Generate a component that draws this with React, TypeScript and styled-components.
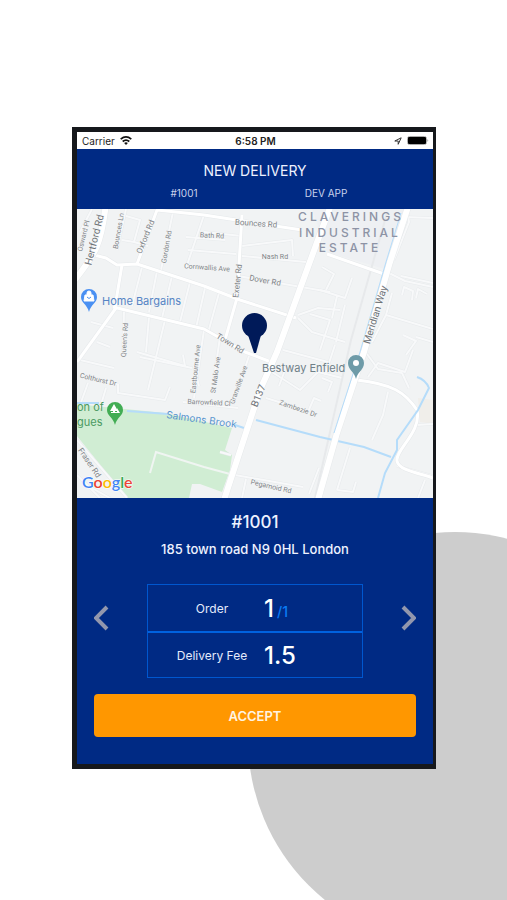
import React from "react";
import styled, { createGlobalStyle } from "styled-components";

const GlobalStyle = createGlobalStyle`
  * { box-sizing: border-box; }
  body {
    margin: 0;
    background: #fff;
    font-family: Inter, "Liberation Sans", sans-serif;
  }
  button { font: inherit; cursor: pointer; }
`;

const Page = styled.main`
  position: relative;
  min-height: 100vh;
  padding: 127px 71px 131px 72px;
  overflow: hidden;
`;

const Disc = styled.div`
  position: absolute;
  top: 532px;
  right: -155px;
  width: 414px;
  height: 414px;
  border-radius: 50%;
  background: #cdcdcd;
`;

const Phone = styled.section`
  position: relative;
  display: flex;
  flex-direction: column;
  border: 5px solid #16181c;
  border-right-width: 3px;
  background: #002a84;
  color: #eef2ff;
`;

const StatusBar = styled.div`
  display: grid;
  grid-template-columns: 1fr auto 1fr;
  align-items: center;
  height: 17px;
  padding: 0 4px 0 5px;
  background: #fff;
  color: #222;
  font-size: 10px;
  line-height: 16px;
`;

const StatusGroup = styled.div<{ $end?: boolean }>`
  display: flex;
  align-items: center;
  justify-content: ${(p) => (p.$end ? "flex-end" : "flex-start")};
  gap: 5px;
`;

const Clock = styled.time`
  font-weight: 600;
`;

const Header = styled.header`
  display: flex;
  flex-direction: column;
  gap: 6px;
  padding: 13px 36px 9px;
  text-align: center;
`;

const Title = styled.h1`
  margin: 0;
  font-size: 14px;
  font-weight: 400;
  line-height: 18px;
`;

const Meta = styled.div`
  display: grid;
  grid-template-columns: 1fr 1fr;
  font-size: 10px;
  line-height: 14px;
  color: #c9d2ec;
`;

const MapView = styled.svg`
  display: block;
  width: 100%;
  height: auto;
  background: #f1f3f4;
`;

const StreetName = styled.text<{ $size: number }>`
  font-family: Roboto, "Liberation Sans", sans-serif;
  font-size: ${(p) => p.$size}px;
  fill: ${(p) => (p.$size > 9 ? "#6d7276" : "#808487")};
  text-anchor: middle;
  dominant-baseline: middle;
  paint-order: stroke;
  stroke: #f5f6f7;
  stroke-width: 1px;
`;

const PlaceName = styled.text<{ $color: string; $size?: number }>`
  font-size: ${(p) => p.$size ?? 11}px;
  fill: ${(p) => p.$color};
`;

const Details = styled.div`
  padding: 12px 17px 27px;
  text-align: center;
`;

const OrderId = styled.h2`
  margin: 0 0 5px;
  font-size: 17px;
  font-weight: 500;
  line-height: 24px;
`;

const Address = styled.p`
  margin: 0 0 25px;
  font-size: 13px;
  font-weight: 500;
  line-height: 20px;
`;

const Pager = styled.div`
  display: flex;
  align-items: center;
  justify-content: space-between;
  margin-bottom: 16px;
`;

const ArrowButton = styled.button`
  display: flex;
  padding: 0;
  border: 0;
  background: none;
  color: #9297ad;
  margin-bottom: 26px;
`;

const Summary = styled.dl`
  flex: 0 1 216px;
  margin: 0;
  border: 1px solid #0057cf;
`;

const SummaryRow = styled.div`
  display: grid;
  grid-template-columns: 104px 1fr;
  align-items: center;
  height: 46px;
  padding-left: 12px;
  & + & {
    border-top: 2px solid #0062e0;
  }
`;

const Label = styled.dt`
  font-size: 12px;
  color: #e4eafc;
`;

const Value = styled.dd`
  margin: 0;
  text-align: left;
  font-size: 24px;
  font-weight: 500;
  color: #fff;
`;

const Total = styled.span`
  margin-left: 3px;
  font-size: 14px;
  color: #0a7cf4;
`;

const AcceptButton = styled.button`
  display: block;
  width: 100%;
  height: 43px;
  border: 0;
  border-radius: 4px;
  background: #ff9700;
  color: #fff4e2;
  font-size: 13px;
  font-weight: 600;
`;

const minorRoads = [
  "M80 232 92 209",
  "M117 250 126 209M126 216 140 220 134 242 122 240",
  "M134 242 148 246",
  "M161 270 173 212",
  "M204 215 186 268M186 237 225 240M188 250 236 254",
  "M204 232 242 236M242 246 292 240 293 256M242 256 306 262",
  "M238 276 330 292",
  "M142 267 132 306M157 271 149 312M172 276 162 318M190 282 180 322M205 288 196 328M219 293 208 333",
  "M124 311 123 352M149 317 146 352",
  "M91 322 113 328M97 342 110 347",
  "M165 320 148 390M204 330 194 398M220 337 213 385M249 356 233 404",
  "M80 360 114 368M137 352 185 366 183 355",
  "M83 375 117 384M88 383 80 405M106 388 100 408",
  "M140 357 192 368M118 384 118 393 165 400 170 387",
  "M183 402 238 408M194 366 199 386",
  "M298 315 318 308 340 310M298 318 312 332 345 342",
  "M283 350 328 362M272 372 300 390 318 372 342 378",
  "M266 398 282 403 308 413M308 412 314 398 321 401",
  "M322 267 334 274 326 290M320 290 345 298 352 278M337 296 332 318M310 314 330 320 320 350M345 305 336 342",
  "M335 345 325 375M322 378 332 382 328 392",
  "M389 273 405 281 433 287M401 276 433 283",
  "M402 295 404 287 413 291 412 300M416 298 418 289 427 294",
  "M392 293 386 315 372 342M386 315 433 329M403 335 416 341 406 355M416 337 433 342",
  "M407 210 409 222 394 260M404 217 433 218",
  "M367 354 378 369 402 373M368 377 378 363 405 372 413 350M402 373 409 388",
  "M388 392 383 415 372 440M350 448 337 490M337 490 353 492 356 482",
  "M417 425 433 424M397 466 433 476",
  "M235 475 303 487M309 494 319 468M246 479 242 498",
  "M425 480 418 498",
  "M77 475 100 498M92 488 110 498M77 440 127 498",
  "M285 370 279 386M271 371 263 367",
  "M220 452 231 455",
];

const mainRoads = [
  "M94 255 106 258 117 265 137 264 204 286 240 300 296 318",
  "M137 264 157 210 204 215 243 221 302 230",
  "M122 265 115 307",
  "M113 307 204 329 245 352 271 362",
  "M116 308 77 362",
  "M242 215 237 298 225 340",
  "M327 254 384 274",
  "M357 380C392 384 405 392 417 410C422 432 395 450 397 461C399 471 420 473 433 478",
];

type Street = [name: string, x: number, y: number, angle: number, size: number];

const streets: Street[] = [
  ["Hertford Rd", 95, 240, -76, 10],
  ["Osward Pl", 84, 236, -76, 7],
  ["Bounces Ln", 119, 231, -80, 7],
  ["Oxford Rd", 146, 237, -68, 8],
  ["Gordon Rd", 167, 247, -80, 7],
  ["Bounces Rd", 256, 224, 4, 8],
  ["Bath Rd", 212, 236, 3, 7],
  ["Nash Rd", 275, 257, 0, 7],
  ["Cornwallis Ave", 207, 268, 4, 7],
  ["Dover Rd", 265, 281, 10, 8],
  ["Exeter Rd", 238, 281, -84, 8],
  ["Town Rd", 230, 344, 32, 8],
  ["Queen's Rd", 125, 340, -86, 7],
  ["Eastbourne Ave", 196, 369, -84, 7],
  ["St Malo Ave", 216, 375, -82, 7],
  ["Granville Ave", 239, 385, -70, 7],
  ["Barrowfield Cl", 209, 403, 3, 7],
  ["Colthurst Dr", 98, 380, 13, 7],
  ["Fraser Rd", 89, 463, 56, 8],
  ["Zambezie Dr", 298, 409, 19, 7],
  ["Pegamoid Rd", 271, 487, 13, 7],
  ["B137", 259, 396, -68, 10],
  ["Meridian Way", 376, 315, -73, 10],
];

function DeliveryMap() {
  return (
    <MapView viewBox="77 209 356 289" role="img" aria-label="Map of the delivery area">
      <path d="M312 209H406L388 270 327 252Z" fill="#eef0f3" />
      <path d="M418 398 433 400V424L420 422Z" fill="#f0eeea" />
      <path
        d="M77 404 95 406 165 413 232 428 225 450 232 455 230 470 222 492 200 484H192L189 498H127L77 436Z"
        fill="#d0edd3"
      />
      <g fill="none" stroke="#e7eaec" strokeWidth="3" strokeLinejoin="round">
        {minorRoads.map((d) => <path key={d} d={d} />)}
      </g>
      <g fill="none" stroke="#f8f9fa" strokeWidth="2" strokeLinejoin="round">
        {minorRoads.map((d) => <path key={d} d={d} />)}
      </g>
      <path d="M387 213 351 340 315 498" fill="none" stroke="#e7e9eb" strokeWidth="2" />
      <g fill="none" stroke="#e6e9eb" strokeWidth="4" strokeLinejoin="round">
        {mainRoads.map((d) => <path key={d} d={d} />)}
      </g>
      <g fill="none" stroke="#fff" strokeWidth="3" strokeLinejoin="round">
        {mainRoads.map((d) => <path key={d} d={d} />)}
      </g>
      <path d="M150 473 156 452 204 467 230 474" fill="none" stroke="#f0f5f2" strokeWidth="2" />
      <g fill="none" stroke="#b5dcfa" strokeWidth="2">
        <path d="M77 403H99M127 411 168 414M235 425 244 428M256 420 320 437 364 447 391 457" />
        <path d="M417 377C423 379 427 383 429 388L418 410 397 440V450L385 473 378 498" />
      </g>
      <g fill="none" strokeLinejoin="round">
        <path d="M106 203C101 248 94 255 74 281" stroke="#e6e9eb" strokeWidth="7" />
        <path d="M106 203C101 248 94 255 74 281" stroke="#fff" strokeWidth="6" />
        <path d="M331 205 316 245 277 352 260 390 224 500" stroke="#e6e9eb" strokeWidth="7" />
        <path d="M331 205 316 245 277 352 260 390 224 500" stroke="#fff" strokeWidth="6" />
        <path d="M408 207 390 262 364 352 337 433 318 500" stroke="#e6e9eb" strokeWidth="7" />
        <path d="M408 207 390 262 364 352 337 433 318 500" stroke="#fff" strokeWidth="6" />
        <path d="M401 213 386 262 360 352 334 433" stroke="#b5dcfa" />
      </g>

      {streets.map(([name, x, y, angle, size]) => (
        <StreetName key={name} $size={size} transform={`translate(${x} ${y}) rotate(${angle})`}>
          {name}
        </StreetName>
      ))}

      <g textAnchor="middle" letterSpacing="3" fontWeight="500">
        <PlaceName $color="#8d93a5" $size={12} x="351" y="221">CLAVERINGS</PlaceName>
        <PlaceName $color="#8d93a5" $size={12} x="350" y="237">INDUSTRIAL</PlaceName>
        <PlaceName $color="#8d93a5" $size={12} x="350" y="252">ESTATE</PlaceName>
      </g>
      <PlaceName $color="#5584c4" x="102" y="305">Home Bargains</PlaceName>
      <PlaceName $color="#6f8088" x="262" y="372">Bestway Enfield</PlaceName>
      <PlaceName $color="#4b9a62" x="77" y="411">on of</PlaceName>
      <PlaceName $color="#4b9a62" x="77" y="426">gues</PlaceName>
      <PlaceName $color="#5793cf" $size={10} transform="translate(166 418) rotate(8)">
        Salmons Brook
      </PlaceName>

      <path d="M89 312C87 304 81 303 81 297a8 8 0 0 1 16 0C97 303 91 304 89 312Z" fill="#4a90f2" />
      <path d="M85 295H93L94 301H84ZM87 295V293a2 2 0 0 1 4 0V295" fill="#fff" stroke="#fff" />
      <path d="M87 297Q89 300 91 297" fill="none" stroke="#4a90f2" />

      <path d="M115 425C113 417 107 416 107 410a8 8 0 0 1 16 0C123 416 117 417 115 425Z" fill="#42ad54" />
      <path d="M114 404 118 411H115V413H113V411H110ZM117 408 120 413H111V412H117Z" fill="#fff" />

      <path d="M356 379C354 371 348 370 348 363a8 8 0 0 1 16 0C364 370 358 371 356 379Z" fill="#6e9ba8" />
      <circle cx="356" cy="363" r="3" fill="#fff" />

      <circle cx="254.500" cy="325.500" r="12.500" fill="#001a59" />
      <path d="M248 335H261L256 353H254Z" fill="#001a59" />

      <text
        x="82"
        y="488"
        fontFamily="Lato, sans-serif"
        fontSize="16"
        fontWeight="600"
        stroke="#fff"
        strokeWidth="1"
        paintOrder="stroke"
      >
        <tspan fill="#4285f4">G</tspan>
        <tspan fill="#ea4335">o</tspan>
        <tspan fill="#fbbc05">o</tspan>
        <tspan fill="#4285f4">g</tspan>
        <tspan fill="#34a853">l</tspan>
        <tspan fill="#ea4335">e</tspan>
      </text>
    </MapView>
  );
}

function WifiIcon() {
  return (
    <svg width="12" height="9" viewBox="0 0 12 9" aria-hidden="true">
      <g fill="none" stroke="#111" strokeWidth="1.7">
        <path d="M.7 3.2Q6-1.3 11.3 3.2" />
        <path d="M2.7 5.5Q6 2.6 9.3 5.5" />
      </g>
      <path d="M6 9 4.1 7Q6 5.5 7.9 7Z" fill="#111" />
    </svg>
  );
}

function LocationIcon() {
  return (
    <svg width="8" height="8" viewBox="0 0 8 8" aria-hidden="true">
      <path d="M.8 4 7.2.8 4.2 7.3V4Z" fill="none" stroke="#333" strokeLinejoin="round" />
    </svg>
  );
}

function BatteryIcon() {
  return (
    <svg width="22" height="9" viewBox="0 0 22 9" aria-hidden="true">
      <rect x=".5" y=".5" width="19" height="8" rx="2" fill="#fff" stroke="#aaa" />
      <rect x="1" y="1" width="18" height="7" rx="1" fill="#000" />
      <path d="M20.500 3Q22 4.500 20.500 6Z" fill="#888" />
    </svg>
  );
}

function Chevron({ d }: { d: string }) {
  return (
    <svg width="15" height="26" viewBox="0 0 15 26" aria-hidden="true">
      <path d={d} fill="none" stroke="currentColor" strokeWidth="4" />
    </svg>
  );
}

export default function App() {
  return (
    <>
      <GlobalStyle />
      <Page>
        <Disc />
        <Phone>
          <StatusBar>
            <StatusGroup>
              <span>Carrier</span>
              <WifiIcon />
            </StatusGroup>
            <Clock>6:58 PM</Clock>
            <StatusGroup $end>
              <LocationIcon />
              <BatteryIcon />
            </StatusGroup>
          </StatusBar>
          <Header>
            <Title>NEW DELIVERY</Title>
            <Meta>
              <span>#1001</span>
              <span>DEV APP</span>
            </Meta>
          </Header>
          <DeliveryMap />
          <Details>
            <OrderId>#1001</OrderId>
            <Address>185 town road N9 0HL London</Address>
            <Pager>
              <ArrowButton aria-label="Previous delivery">
                <Chevron d="M13 2 2 13 13 24" />
              </ArrowButton>
              <Summary>
                <SummaryRow>
                  <Label>Order</Label>
                  <Value>1<Total>/1</Total></Value>
                </SummaryRow>
                <SummaryRow>
                  <Label>Delivery Fee</Label>
                  <Value>1.5</Value>
                </SummaryRow>
              </Summary>
              <ArrowButton aria-label="Next delivery">
                <Chevron d="M2 2 13 13 2 24" />
              </ArrowButton>
            </Pager>
            <AcceptButton>ACCEPT</AcceptButton>
          </Details>
        </Phone>
      </Page>
    </>
  );
}
